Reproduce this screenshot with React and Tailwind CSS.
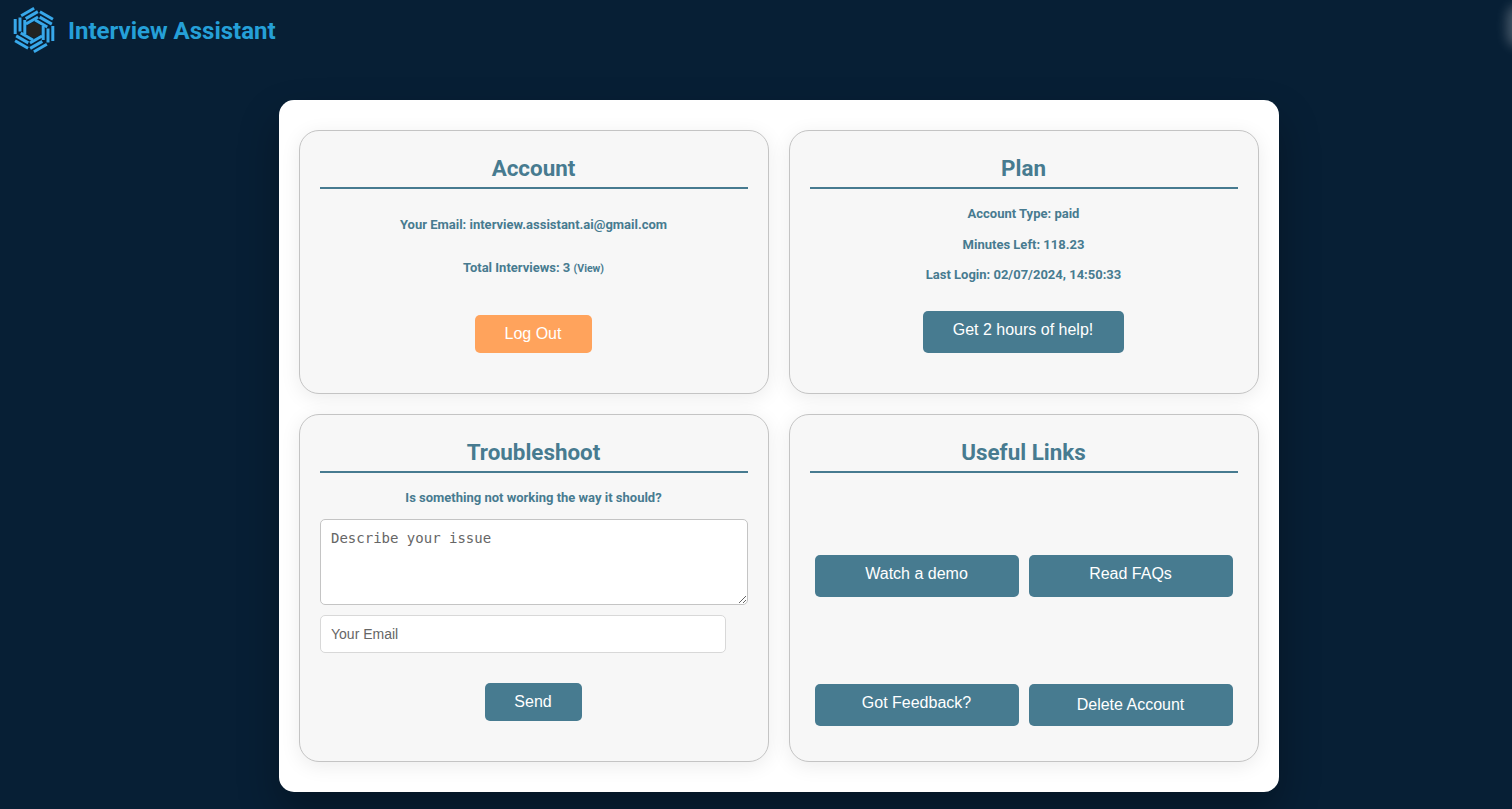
const roboto = "font-['Roboto',sans-serif]";

// one arm of the logo, repeated six times around the centre
const arms = [30, 90, 150, 210, 270, 330];

function Logo() {
  return (
    <svg width="44" height="50" viewBox="-22 -25 44 50" fill="none" stroke="#38a8ea" strokeWidth="3">
      <circle r="7.5" fill="#222222" stroke="none" />
      {arms.map((angle) => (
        <g key={angle} transform={`rotate(${angle})`}>
          <path d="M-4 -18.8 L11 -18.8" />
          <path d="M-1.5 -14 L12.5 -14" />
          <path d="M-4 -9.2 L10 -9.2" />
        </g>
      ))}
    </svg>
  );
}

function Card({ title, className = "", children }) {
  return (
    <div className={`flex flex-col rounded-[20px] border border-[#c4c4c4] bg-[#f7f7f7] px-5 pt-[23px] shadow-[0_4px_20px_rgba(0,0,0,0.08)] ${className}`}>
      <h2 className={`${roboto} border-b-2 border-[#477b90] pr-px pb-1 text-center text-[22.4px] leading-[29px] font-bold text-[#477b90]`}>{title}</h2>
      {children}
    </div>
  );
}

function Button({ className = "", children }) {
  return (
    <button className={`rounded-[5px] bg-[#477b90] pr-px text-center font-['Liberation_Sans',sans-serif] text-base leading-[18px] text-white ${className}`}>
      {children}
    </button>
  );
}

function Info({ className = "", children }) {
  return <p className={`${roboto} pr-px text-center text-[13px] leading-[14px] font-bold text-[#477b90] ${className}`}>{children}</p>;
}

export default function App() {
  return (
    <div className="flex min-h-[809px] flex-col bg-[#071f35]">
      <header className="flex h-[60px] items-center pl-3">
        <Logo />
        <h1 className={`${roboto} ml-3 pt-[1px] text-[24px] font-bold text-[#25a0d8]`}>Interview Assistant</h1>
      </header>

      <main className="mt-10 ml-[279px] w-[1000px] rounded-[15px] bg-white px-5 py-[30px] shadow-[0_20px_40px_rgba(0,0,0,0.3)]">
        <div className="grid grid-cols-2 gap-5">
          <Card title="Account" className="h-[264px]">
            <Info className="mt-[29px]">Your Email: interview.assistant.ai@gmail.com</Info>
            <Info className="mt-[29px]">Total Interviews: 3 <span className="text-[10.5px]">(View)</span></Info>
            <button className="mt-[39px] ml-[155px] h-[38px] w-[117px] self-start rounded-[5px] bg-[#ffa35c] pr-px font-['Liberation_Sans',sans-serif] text-base text-white">Log Out</button>
          </Card>

          <Card title="Plan" className="h-[264px]">
            <Info className="mt-[18px]">Account Type: paid</Info>
            <Info className="mt-[17px]">Minutes Left: 118.23</Info>
            <Info className="mt-[16px]">Last Login: 02/07/2024, 14:50:33</Info>
            <Button className="mt-[29px] ml-[113px] h-[42px] w-[201px] self-start pb-[4px]">Get 2 hours of help!</Button>
          </Card>

          <Card title="Troubleshoot" className="h-[348px]">
            <Info className="mt-[18px]">Is something not working the way it should?</Info>
            <textarea
              placeholder="Describe your issue"
              className="mt-[14px] block h-[86px] w-full rounded-[5px] border border-[#c4c4c4] bg-white p-2.5 font-['DejaVu_Sans_Mono',monospace] text-[14px] leading-[17px] placeholder:text-[#666]"
            />
            <input
              placeholder="Your Email"
              className="mt-2.5 block h-[38px] w-[406px] rounded-[5px] border border-[#d8d8d8] bg-white px-2.5 font-['Liberation_Sans',sans-serif] text-[14px] placeholder:text-[#666]"
            />
            <Button className="mt-[30px] ml-[165px] h-[38px] w-[97px] self-start">Send</Button>
          </Card>

          <Card title="Useful Links" className="h-[348px]">
            <div className="mt-[82px] grid grid-cols-2 gap-x-2.5 gap-y-[87px] px-[5px]">
              <Button className="h-[42px] pb-[4px]">Watch a demo</Button>
              <Button className="h-[42px] pb-[4px]">Read FAQs</Button>
              <Button className="h-[42px] pb-[4px]">Got Feedback?</Button>
              <Button className="h-[42px]">Delete Account</Button>
            </div>
          </Card>
        </div>
      </main>

      <div className="pointer-events-none fixed top-[10px] right-[-14px] h-[32px] w-[14px] rounded-full shadow-[0_0_12px_5px_rgba(255,255,255,0.25)]" />
    </div>
  );
}
